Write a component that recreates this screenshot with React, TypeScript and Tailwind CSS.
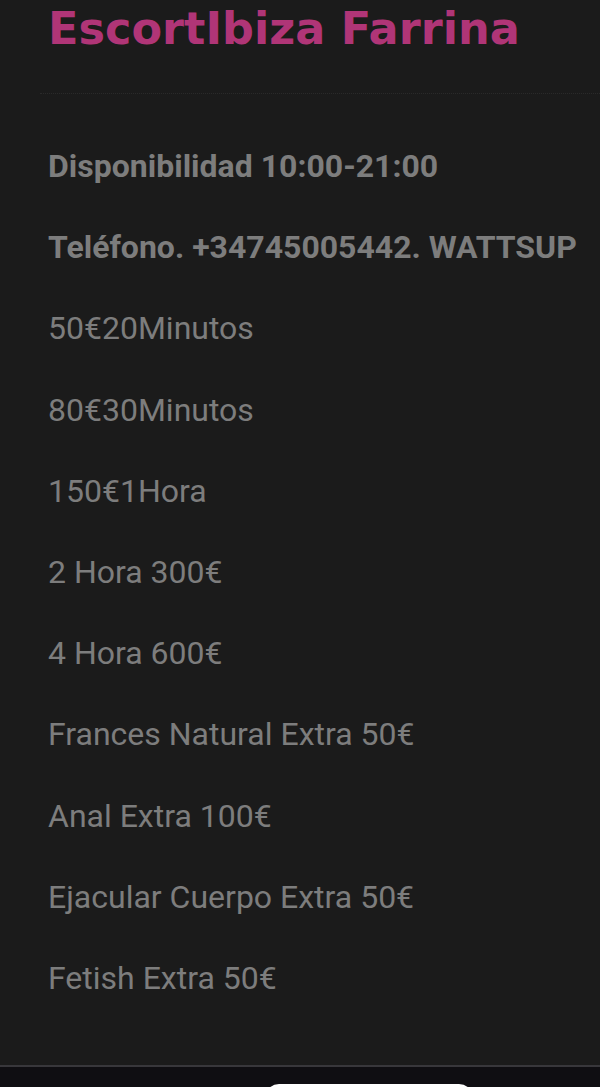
export default function App() {
  const rows = [
    { text: 'Disponibilidad 10:00-21:00', bold: true },
    { text: 'Teléfono. +34745005442. WATTSUP', bold: true },
    { text: '50€20Minutos' },
    { text: '80€30Minutos' },
    { text: '150€1Hora' },
    { text: '2 Hora 300€' },
    { text: '4 Hora 600€' },
    { text: 'Frances Natural Extra 50€' },
    { text: 'Anal Extra 100€' },
    { text: 'Ejacular Cuerpo Extra 50€' },
    { text: 'Fetish Extra 50€' },
  ];

  return (
    <div className="w-[600px] h-[1087px] overflow-hidden bg-[#1b1b1b] flex flex-col">
      <div className="flex-1 flex flex-col">
        {/* titulo */}
        <h1 className="pl-[48px] pt-[1px] text-[44.6px] leading-[56px] font-bold text-[#b03577] [font-family:'DejaVu_Sans',sans-serif]">
          EscortIbiza Farrina
        </h1>

        <div className="ml-[40px] mt-[36px] border-t border-dotted border-[#2a2a2a]" />

        <div className="pl-[48px] pt-[53px] flex flex-col gap-[43.2px] [font-family:Roboto,sans-serif] text-[#7d7d7d]">
          {rows.map((r, i) => (
            <div
              key={i}
              className={`text-[32px] leading-[38px] whitespace-nowrap ${r.bold ? 'font-bold' : 'font-normal'}`}
            >
              {r.text}
            </div>
          ))}
        </div>
      </div>

      {/* barra inferior */}
      <div className="h-[22px] shrink-0 border-t-2 border-[#38373b] bg-[#0f0e12] flex">
        <div className="ml-[265px] mt-[17px] w-[208px] h-[20px] rounded-t-[14px] bg-white" />
      </div>
    </div>
  );
}
